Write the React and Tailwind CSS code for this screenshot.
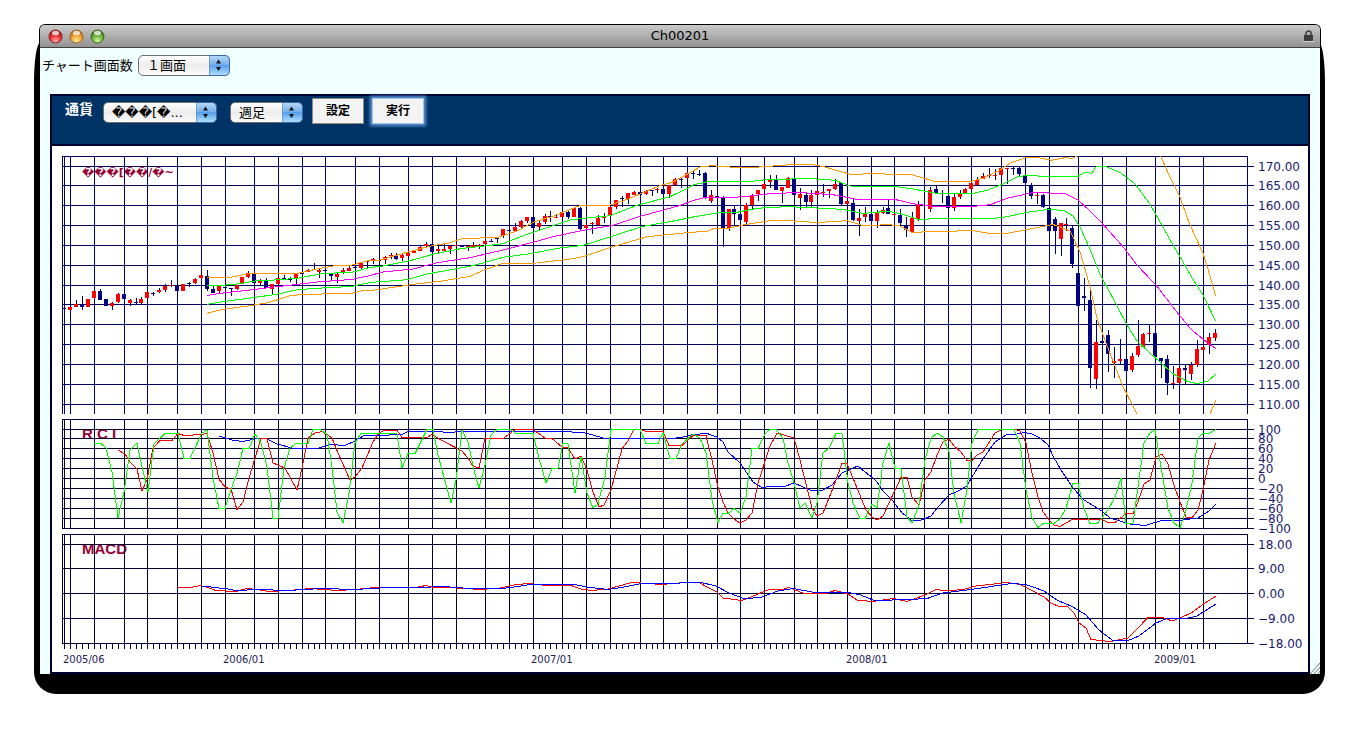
import React from "react";

const BAD = "\uFFFD";

// week number of each month line and its x position
const MONTHS = [
  [0, 64], [1, 70], [5, 94], [10, 124], [14, 147], [19, 177], [23, 201], [27, 225], [32, 254], [36, 278],
  [40, 302], [44, 325], [49, 355], [53, 379], [58, 408], [62, 432], [66, 456], [71, 485], [75, 509], [79, 533],
  [84, 562], [88, 586], [92, 610], [97, 640], [101, 663], [105, 687], [110, 717], [114, 740], [118, 764],
  [123, 794], [127, 817], [132, 847], [136, 871], [140, 894], [145, 924], [149, 948], [153, 971], [158, 1001],
  [162, 1025], [166, 1049], [171, 1078], [175, 1102], [179, 1126], [184, 1155], [188, 1179], [192, 1203],
  [194, 1215],
];
const MONTH_LINES = MONTHS.slice(0, -1);

function columnX(week) {
  const next = Math.max(1, MONTHS.findIndex(([w]) => w >= week));
  const [w0, x0] = MONTHS[next - 1];
  const [w1, x1] = MONTHS[next];
  return Math.round(x0 + ((x1 - x0) * (week - w0)) / (w1 - w0));
}

const WEEKS = 195;

// direction, body top, body bottom, wick top, wick bottom
const CANDLES = `
b 308 309 308 309|r 307 310 307 310|r 304 307 300 307|b 304 307 296 310|r 299 307 299 307|r 291 298 291 298
b 291 300 289 300|b 299 306 299 306|r 303 306 302 310|r 294 302 293 303|b 294 299 294 299|r 300 303 299 306
b 302 303 298 304|r 299 303 297 304|r 292 298 292 298|b 293 294 292 296|r 290 292 288 293|r 286 290 284 292
r 285 286 280 287|b 286 291 286 291|r 284 291 284 291|b 283 284 282 287|r 279 283 278 284|r 275 278 275 278
b 276 289 270 291|b 289 293 285 293|r 286 291 286 294|b 287 288 287 288|b 288 289 288 296|r 285 289 285 290
r 277 284 277 284|r 273 277 271 278|b 274 283 274 283|r 280 283 279 285|b 280 288 278 288|r 284 289 284 294
r 278 284 278 284|b 278 279 275 279|b 279 280 277 282|r 274 278 274 284|b 273 274 273 274|r 270 272 269 272
b 269 270 263 270|r 270 272 269 278|b 270 271 268 271|b 274 276 274 280|r 274 277 272 283|r 270 272 268 274
r 268 271 266 271|b 267 268 266 271|r 262 268 262 269|r 261 262 260 268|r 259 260 258 264|b 260 261 259 262
r 257 260 256 264|r 255 256 253 259|b 255 259 253 260|r 255 258 254 261|r 253 256 253 256|r 250 253 250 253
r 247 251 246 251|r 244 246 242 247|b 244 252 244 252|r 249 251 245 253|r 249 251 244 251|r 246 249 246 254
r 245 246 245 246|b 245 247 245 247|r 246 247 246 251|r 245 247 242 247|r 245 247 244 249|r 241 244 241 244
b 241 242 239 242|b 238 239 238 243|r 229 236 229 238|b 230 231 230 231|r 227 231 223 231|r 221 227 220 228
r 217 221 217 223|b 217 228 217 231|r 223 227 221 230|r 216 222 214 224|b 216 217 211 222|r 217 218 215 218
r 212 217 212 217|b 212 217 210 219|r 208 217 208 217|b 208 229 207 230|r 225 228 225 228|r 223 224 222 234
r 218 225 215 225|r 216 218 213 223|r 207 215 207 215|r 200 207 200 209|b 198 199 196 207|r 193 199 193 204
r 192 195 191 195|b 192 195 192 195|r 191 194 190 195|b 190 191 190 196|r 189 190 188 193|b 189 194 189 194
r 185 194 185 198|r 179 185 178 185|b 179 180 178 188|r 173 178 173 178|b 173 174 171 179|b 174 175 170 176
b 173 198 172 199|r 195 201 190 203|b 196 197 196 197|b 197 228 196 247|r 209 228 209 231|b 209 214 206 225
b 214 220 213 225|r 205 222 203 224|r 196 205 194 210|r 190 194 190 201|r 184 189 181 189|r 179 182 175 188
b 179 190 175 190|r 187 191 187 203|r 178 188 177 188|b 179 195 179 195|r 194 198 188 210|b 195 202 192 207
r 195 202 190 207|r 191 195 191 196|r 192 193 184 197|r 189 191 189 198|r 184 189 179 190|b 183 204 182 205
r 201 204 201 204|b 203 220 199 221|r 218 221 209 236|r 213 217 207 222|b 214 221 212 224|r 212 221 210 228
r 210 213 207 214|b 208 214 200 214|r 214 215 214 215|b 215 223 209 225|b 226 230 217 237|r 218 232 212 232
r 205 219 201 221|b 205 206 205 206|r 190 209 187 212|b 189 193 186 193|b 193 194 190 203|b 196 208 191 208
r 197 208 194 211|r 193 197 190 199|r 189 193 188 193|r 183 189 183 189|r 180 185 177 185|r 176 179 173 179
r 175 176 168 178|r 175 176 169 180|r 168 175 168 175|r 168 169 168 184|b 168 169 167 175|b 168 174 167 176
b 176 183 176 183|b 185 196 183 199|r 195 196 193 204|b 195 207 194 208|b 208 231 208 231|b 219 231 217 254
r 223 239 223 256|r 224 225 218 231|b 228 264 226 268|b 273 306 273 306|b 296 298 278 311|b 300 368 289 388
r 342 379 320 389|b 341 343 325 347|b 335 354 330 372|r 361 363 347 378|r 359 361 339 364|b 359 371 359 371
r 356 370 353 372|r 346 355 320 357|r 334 347 333 347|r 333 334 325 342|b 333 357 333 357|b 358 361 358 378
b 359 383 355 395|r 383 384 366 389|r 368 383 368 383|b 368 370 365 384|r 365 374 362 380|r 349 365 340 367
r 347 350 341 350|r 337 345 333 354|r 333 338 329 341`
  .trim()
  .split(/[|\n]/)
  .map((row) => {
    const [dir, ...values] = row.split(" ");
    return [dir, ...values.map(Number)];
  });

const BANDS = [
  {
    color: "#ff9900",
    points:
      "207,277 223,277 232,277 250,273.5 297,273.5 317,269 333,266 352,265 363,262 370,260.3 380,260 407,252.3 432,245.7 448,243.3 463,238.5 498,237.5 517,231 533,222.3 553,216.3 580,205.5 608,205.5 623,201 660,185.7 672,182.3 688,173.7 700,167 712,165.7 730,167 742,168 767,166.5 795,164.3 813,164.7 825,167 850,174.3 877,173.7 893,174.3 913,175 923,178 935,181.5 970,181.5 983,178.3 990,175 1000,170 1010,163 1025,158 1038,157.7 1052,160.3 1065,157.7 1072,158.3 1077,156",
  },
  { color: "#ff9900", points: "1160.7,156 1168,172.7 1180,197.3 1190,225 1203,253.3 1208,269 1215.7,296" },
  {
    color: "#00ff00",
    points:
      "207,285.5 220,285.5 237,284 255,281 280,279.7 297,278.3 323,273.5 352,272.3 370,267.5 383,266 410,260.7 433,254.3 460,248.7 487,245.7 503,243.7 527,234.3 570,220 583,218.3 610,215.7 637,205.3 670,196.7 690,187 693,185 708,181.6 745,182 770,179.3 813,178.7 835,180.3 850,186 895,186.4 913,189 937,193.4 973,193.4 987,190.3 1003,184 1018,176.7 1027,175.4 1050,176.7 1078,176.3 1085,172.3 1092,173.3 1096,166.7 1105,166.3 1120,172.3 1135,183.7 1150,204.3 1160,221.7 1173,245 1180,256.7 1192,277.7 1203,295 1215.7,321.3",
  },
  {
    color: "#ff00ff",
    points:
      "207,295.4 223,293 250,290 277,286.7 298,284.3 317,282 352,279.4 370,275.5 383,272 413,269 437,262.7 470,257.7 503,250 533,242.3 553,236.7 583,230.3 613,225.3 640,216.3 670,208.3 680,205.3 695,200 707,197 730,197.7 750,196 767,194 797,192.4 833,194.7 857,199.4 895,199.4 913,203.7 933,206.4 973,206.4 990,204.7 1007,198.3 1032,192.7 1065,193.3 1078,200 1090,211 1103,224.3 1123,246.7 1137,265 1157,286.3 1177,312.3 1192,330.3 1207,342.3 1215.7,348.7",
  },
  {
    color: "#00ff00",
    points:
      "207,304.4 223,301.7 250,298 277,294.3 297,289.7 317,288.3 352,286.4 370,282.5 407,279.7 427,274 473,265.7 503,257.3 533,253.3 557,248.3 583,245.4 613,236 643,226.3 670,221.7 697,216.3 717,213 737,212.3 757,208.3 787,206.6 823,208.3 843,209.4 863,213.4 888,211.3 902,214 918,219.3 953,218.4 973,219 993,218.5 1007,216.7 1027,212.3 1050,209.2 1065,211 1073,216 1080,226.7 1090,249.3 1100,274.3 1113,298.3 1127,325 1137,341 1153,355.7 1173,373.7 1187,381.3 1197,383.7 1208,381 1215.7,374.3",
  },
  {
    color: "#ff9900",
    points:
      "207,313.4 223,309.3 250,305.7 268,302.7 290,295.7 303,294.4 352,293.4 363,290.4 375,290 412,284.5 442,281 470,276.3 485,269.7 503,263.4 537,263 570,259 583,256.7 613,246.7 647,236.7 690,232.4 707,231.3 715,228 727,228.7 743,225 768,221 790,220.7 817,222.6 847,220.7 863,225.5 890,224.7 900,226 912,232.4 937,231.4 973,230.7 993,234 1007,233.4 1037,227.7 1053,224.4 1070,231 1080,251.7 1090,286.7 1097,318.3 1108,348.3 1123,386.7 1137,414",
  },
  { color: "#ff9900", points: "1210,414 1215.7,400.3" },
];

const RCI = [
  {
    color: "#0000ff",
    points:
      "219,436 232,440 243,441.5 250,440 260,438 267,439 277,444 292,448 302,448.5 317,448.5 330,444.5 345,445.5 355,441 363,436 402,434.5 408,431.5 438,431.5 448,432.5 463,431.5 560,431.5 583,432.5 593,435 605,438.5 673,438.5 683,437 693,434.5 707,433.5 717,437 723,442 728,452 740,463 753,482 762,487.5 775,486 783,487 794,483 812,491 823,490 832,485 842,473 853,468 858,466 865,472 873,478 877,482 883,491 893,501 902,513 912,520.5 920,520.5 931,516 938,507 949,495 958,491 967,486 972,477 983,459 995,442 1007,434.5 1017,434 1025,432.5 1032,434 1040,438 1048,445 1054,458 1063,473 1073,488 1084,500 1102,511 1110,518 1130,524 1145,525.5 1160,521 1183,520 1198,518 1209,511 1216,504",
  },
  {
    color: "#ff0000",
    points:
      "118,450 125,454 130,462 137,469 142,491 147,480 153,448 160,440.5 172,440.5 178,433.5 184,435.5 202,434.5 207,433.5 213,453 219,479 225,487 231,489 237,510 243,502 249,478 255,458 261,438.5 267,438.5 273,463 285,468 297,490 302,468 308,438 315,433 322,431.5 332,438 338,453 350,480 355,477 362,468 373,442 379,433 384,430.5 397,430.5 402,437.5 427,437.5 432,434.5 443,441 462,451 468,458 473,466 479,468 485,438.5 503,438.5 515,430 533,429.5 545,438 552,438.5 562,447 568,448 575,459 581,456 587,470 593,492 599,507 604,505 611,490 622,449 628,441 634,429.5 642,430 646,431.5 663,431.5 669,445.5 682,445.5 693,435.5 706,435.5 712,460 718,487 723,502 728,513 734,519 740,523 746,520 752,513 758,483 770,446 777,433 794,438 800,460 812,508 817,516 823,513 833,488 842,463.5 847,463.5 853,478 866,510 872,517 877,520 883,516 889,503 895,490 901,477.5 907,477.5 912,497 919,505 925,480 931,472 937,455 943,442 949,439 954,446 961,452 967,460.5 972,460.5 977,455 983,452 990,441 995,433 1002,429.5 1015,429.5 1020,431 1026,443 1032,473 1038,497 1043,512 1050,521 1054,525 1060,526.5 1072,519.5 1102,519.5 1108,522.5 1115,522.5 1126,513.5 1133,513.5 1138,502 1144,484 1150,480 1156,457 1162,454 1168,464 1174,485 1180,502 1186,517 1192,518 1198,510 1203,490 1209,460 1216,443",
  },
  {
    color: "#00ff00",
    points:
      "94,443.5 101,443.5 106,448 112,472 118,518 124,492 130,450 137,443 142,467 148,492 154,444 165,433.5 178,433.5 184,458.5 190,458.5 202,433 207,430 213,478 219,508.5 225,508.5 232,487 237,473 243,448.5 249,448.5 255,434 261,443 267,467 273,518.5 278,518.5 284,468 290,448 296,443.5 308,443.5 313,429.5 320,429.5 327,434 332,467 337,512 343,523 349,493 355,443 361,433.5 397,433.5 402,468 408,453.5 415,453.5 427,429.5 433,429.5 438,455 451,503 456,480 462,430 468,442 474,470 479,488 485,465 491,435 497,429.5 510,429.5 516,433.5 533,433.5 539,458 546,483 552,468.5 558,468.5 563,443.5 568,443.5 575,493 581,457 587,493 593,508 598,504 605,477 611,429.5 640,429.5 646,443.5 658,443.5 663,433 670,458.5 676,458.5 682,444 693,434 700,438 706,453 712,500 718,523 723,513.5 728,513.5 734,508.5 740,513 746,497 752,448.5 758,448.5 765,434 770,429.5 776,429.5 783,438 788,463 794,483 800,508 805,503 812,518 817,503 823,453 829,448 836,433.5 842,433.5 848,483 853,503 860,518.5 865,518.5 872,504 877,508 883,463 889,443 895,468.5 901,468.5 907,517 912,523 919,505 925,460 931,438 937,433 943,437 949,452 954,493 961,523 967,490 972,443 978,429.5 1014,429.5 1020,443 1026,490 1032,518 1038,527.5 1043,523.5 1054,523.5 1060,519 1066,508 1073,483.5 1078,483.5 1084,508 1090,523.5 1097,523.5 1102,518 1108,510 1115,497 1121,478 1126,523.5 1133,523.5 1138,487 1144,443 1150,433 1155,430 1162,473 1168,508 1174,523 1180,527.5 1186,510 1192,483 1198,438 1203,433.5 1209,433.5 1216,429.5",
  },
];

const MACD = [
  {
    color: "#ff0000",
    points:
      "178,587.5 191,587.5 200,585.5 206,587 216,590.5 236,591.5 247,588.5 257,589.5 269,591.5 289,590.5 310,588.5 324,589.5 338,590.5 355,589.5 375,587.5 416,587.5 426,585.5 434,587.5 457,588 481,589.5 500,588 514,585 528,583.5 547,585.5 571,585.5 581,589 591,590.5 608,589 632,582.5 649,583.5 661,584.5 685,582.5 699,582.5 707,587 717,592 723,598 742,600.5 751,597 769,589.5 782,589.5 789,587.5 804,593.5 826,593.5 835,590.5 848,594 857,600 872,601.5 894,598.5 907,601.5 925,595 936,589.5 949,591 965,589 976,586 1007,582.5 1020,584.5 1033,591 1044,597 1051,603 1059,606.5 1068,607 1074,613 1079,623 1086,628 1091,639.5 1110,641.5 1128,638 1136,630 1148,617.5 1163,617.5 1172,621 1180,618 1191,613 1205,603 1216,596",
  },
  {
    color: "#0000ff",
    points:
      "202,586 228,589 236,590.5 259,589.5 287,590.5 322,588.5 355,589.5 387,587.5 418,587.5 444,586.5 469,588.5 502,588.5 518,586.5 530,584.5 575,584.5 587,587 608,589.5 624,587 642,583.5 660,583.5 701,582.5 716,586 729,593 745,599 762,597 778,591 793,588.5 815,592.5 848,592.5 861,595 874,600.5 910,599.5 927,598.5 943,593 971,589.5 1011,583.5 1026,584.5 1044,591 1057,600 1073,607 1086,615 1099,630 1113,640.5 1128,640.5 1139,636 1156,623 1167,618.5 1185,618.5 1196,616.5 1216,604",
  },
];

const PRICE_AXIS = [
  [166, "170.00"], [185, "165.00"], [205, "160.00"], [225, "155.00"], [245, "150.00"], [265, "145.00"],
  [285, "140.00"], [304, "135.00"], [324, "130.00"], [344, "125.00"], [364, "120.00"], [384, "115.00"],
  [404, "110.00"],
];
const RCI_AXIS = [
  [429, "100"], [438, "80"], [448, "60"], [458, "40"], [468, "20"], [478, "0"], [488, "−20"],
  [498, "−40"], [508, "−60"], [518, "−80"], [528, "−100"],
];
const MACD_AXIS = [
  [544, "18.00"], [568, "9.00"], [593, "0.00"], [618, "−9.00"], [643, "−18.00"],
];
const DATES = [
  [63, "2005/06"], [223, "2006/01"], [531, "2007/01"], [846, "2008/01"], [1154, "2009/01"],
];

function Panel({ title, top, bottom, axis, lineColor, children }) {
  const height = bottom - top;
  return (
    <g>
      <text x="82" y={title.y} fill="#990033" className={title.className}>
        {title.text}
      </text>
      <g fill={lineColor}>
        <rect x="62" y={top} width="1185" height="1" />
        <rect x="62" y={top} width="1" height={height} />
        <rect x="1247" y={top} width="1" height={height} />
        {MONTH_LINES.map(([week, x]) => (
          <rect key={week} x={x} y={top} width="1" height={height} />
        ))}
        {axis.map(([y]) => (
          <rect key={y} x="62" y={y} width="1192" height="1" />
        ))}
      </g>
      {children}
      {axis.map(([y, label]) => (
        <text key={y} x="1258" y={y + 5} fill="#191970" className="text-[12px]">
          {label}
        </text>
      ))}
    </g>
  );
}

function Curves({ series }) {
  return series.map((s, n) => <polyline key={n} points={s.points} fill="none" stroke={s.color} strokeWidth="1" />);
}

function Chart() {
  return (
    <svg
      viewBox="52 146 1256 526"
      role="img"
      aria-label="Weekly price chart"
      className="block h-auto w-full bg-white font-['DejaVu_Sans','Noto_Sans_CJK_JP',sans-serif]"
      shapeRendering="crispEdges"
    >
      <clipPath id="price-area">
        <rect x="62" y="156" width="1186" height="258" />
      </clipPath>
      <Panel
        title={{ text: `${BAD}${BAD}${BAD}[${BAD}${BAD}/${BAD}~`, y: 176, className: "text-[11px] font-bold" }}
        top={156}
        bottom={414}
        axis={PRICE_AXIS}
        lineColor="#000066"
      >
        {CANDLES.map(([dir, top, bottom, high, low], i) => (
          <g key={i}>
            <rect x={columnX(i)} y={high} width="1" height={low - high} fill="#000066" />
            <rect x={columnX(i) - 2} y={top} width="4" height={bottom - top} fill={dir === "r" ? "#ff0000" : "#000080"} />
          </g>
        ))}
        <g clipPath="url(#price-area)">
          <Curves series={BANDS} />
        </g>
      </Panel>
      <Panel
        title={{ text: "R C I", y: 439, className: "font-['Liberation_Sans',sans-serif] text-[15px] font-bold" }}
        top={419}
        bottom={529}
        axis={RCI_AXIS}
        lineColor="#000033"
      >
        <Curves series={RCI} />
      </Panel>
      <Panel
        title={{ text: "MACD", y: 554, className: "font-['Liberation_Sans',sans-serif] text-[15px] font-bold" }}
        top={534}
        bottom={644}
        axis={MACD_AXIS}
        lineColor="#000033"
      >
        <Curves series={MACD} />
      </Panel>
      {Array.from({ length: WEEKS }, (_, i) => (
        <rect key={i} x={columnX(i)} y="643" width="1" height="6" fill="#000033" />
      ))}
      {DATES.map(([x, label]) => (
        <text key={x} x={x} y="663" fill="#222255" className="text-[10px]">
          {label}
        </text>
      ))}
    </svg>
  );
}

function PopUp({ id, label, value, className }) {
  return (
    <div className={`relative h-[21px] ${className}`}>
      <select
        id={id}
        aria-label={label}
        defaultValue={value}
        className="block h-full w-full appearance-none overflow-hidden rounded-[5px] border border-[#6f6f6f] bg-linear-to-b from-white via-[#ececec] to-[#fafafa] pl-2 pr-5 text-[13px] leading-[19px] text-black"
      >
        <option>{value}</option>
      </select>
      <svg viewBox="0 0 21 21" aria-hidden="true" className="pointer-events-none absolute top-0 right-0 h-[21px] w-[21px]">
        <defs>
          <linearGradient id={`${id}-cap`} x1="0" y1="0" x2="0" y2="1">
            <stop offset="0" stopColor="#b9d9f8" />
            <stop offset=".45" stopColor="#76b1ee" />
            <stop offset=".5" stopColor="#559fe8" />
            <stop offset="1" stopColor="#b4e2ff" />
          </linearGradient>
        </defs>
        <path d="M0 .5H16A4.500 4.500 0 0 1 20.500 5V16A4.500 4.500 0 0 1 16 20.500H0Z" fill={`url(#${id}-cap)`} stroke="#3b69a5" />
        <path d="M0 1V20" stroke="#78a5d8" />
        <path d="M9.500 4.500L12 8.500H7ZM9.500 16L12 12H7Z" fill="#111" />
      </svg>
    </div>
  );
}

function Light({ name, dark, mid, pale }) {
  return (
    <button type="button" aria-label={name} className="block h-[15px] w-[15px]">
      <svg viewBox="0 0 15 15" aria-hidden="true" className="block h-full w-full">
        <defs>
          <radialGradient id={`light-${name}`} cx=".5" cy=".85" r=".8">
            <stop offset="0" stopColor={pale} />
            <stop offset=".5" stopColor={mid} />
            <stop offset="1" stopColor={dark} />
          </radialGradient>
        </defs>
        <circle cx="7.500" cy="7.500" r="6.500" fill={`url(#light-${name})`} stroke={dark} />
        <ellipse cx="7.500" cy="4" rx="3.500" ry="2.200" fill="#fff" opacity=".75" />
      </svg>
    </button>
  );
}

function TitleBar() {
  return (
    <header className="relative grid h-[23px] grid-cols-[1fr_auto_1fr] items-center rounded-t-[5px] border-b border-[#404040] bg-linear-to-b from-[#cacaca] to-[#929292] px-2 shadow-[0_0_0_1px_#000]">
      <div className="flex gap-[6px]">
        <Light name="close" dark="#8c1a1d" mid="#ee3a40" pale="#ffb0a8" />
        <Light name="minimize" dark="#a5641c" mid="#f5a93c" pale="#fff09a" />
        <Light name="zoom" dark="#3a6b1c" mid="#72b843" pale="#d8f79a" />
      </div>
      <h1 className="text-[13px] leading-[22px] text-black">Ch00201</h1>
      <svg viewBox="0 0 11 12" aria-hidden="true" className="mr-[-2px] h-3 w-[11px] justify-self-end">
        <rect x="0" y="11" width="11" height="1" fill="#d5d5d5" />
        <path d="M3 6V3.500A2.500 2.500 0 0 1 8 3.500V6" fill="none" stroke="#3c3c3c" strokeWidth="1.500" />
        <rect x="1" y="5" width="9" height="6" fill="#3c3c3c" />
      </svg>
    </header>
  );
}

export default function App() {
  return (
    <div className="bg-white px-10 pt-[25px] pb-14 font-['DejaVu_Sans','Noto_Sans_CJK_JP',sans-serif] text-black">
      <div className="relative isolate">
        <div className="absolute top-[18px] -right-[5px] -bottom-5 -left-[6px] -z-10 rounded-t-[6px_40px] rounded-b-[22px] bg-black" />
        <TitleBar />
        <main className="relative bg-[#f0ffff] px-[10px]">
          <div className="-ml-2 flex h-[46px] items-start gap-[5px] pt-[7px]">
            <label htmlFor="screens" className="text-[13px] leading-[21px]">
              チャート画面数
            </label>
            <PopUp id="screens" value="１画面" className="w-[92px]" />
          </div>
          <section className="border-2 border-[#000033]">
            <form
              className="flex h-[50px] items-start border-b-2 border-[#000033] bg-[#003366] pt-[2px] pl-[13px]"
              onSubmit={(e) => e.preventDefault()}
            >
              <label htmlFor="currency" className="mt-[2px] mr-[10px] text-[14px] leading-[18px] font-bold text-white">
                通貨
              </label>
              <PopUp id="currency" value={`${BAD}${BAD}${BAD}[${BAD}...`} className="mt-1 w-[114px]" />
              <PopUp id="period" label="足種" value="週足" className="mt-1 ml-[13px] w-[73px]" />
              <button
                type="button"
                className="ml-[9px] h-[26px] w-[52px] border border-[#8f8a80] bg-[#f3f3f3] text-[12px] leading-[22px] font-bold"
              >
                設定
              </button>
              <button
                type="submit"
                className="ml-2 h-[26px] w-[52px] border border-[#a9c4e6] bg-[#f3f3f3] text-[12px] leading-[22px] font-bold shadow-[0_0_3px_2px_#5a92d2]"
              >
                実行
              </button>
            </form>
            <Chart />
          </section>
          <svg viewBox="0 0 11 11" aria-hidden="true" className="absolute right-0 bottom-0 h-[11px] w-[11px]">
            <path d="M1 11L11 0M5 11L11 4M9 11L11 8" stroke="#777" fill="none" />
          </svg>
        </main>
      </div>
    </div>
  );
}
